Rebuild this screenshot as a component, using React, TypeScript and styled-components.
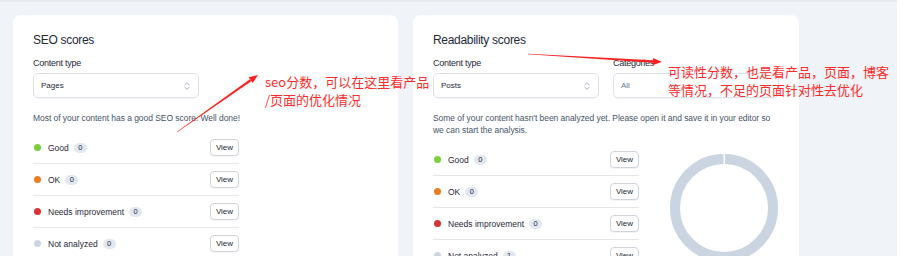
import React from "react";
import styled, { createGlobalStyle } from "styled-components";
import { ChevronsUpDown } from "lucide-react";

const GlobalStyle = createGlobalStyle`
  html, body {
    margin: 0;
    padding: 0;
    background: #ffffff;
  }
`;

type Status = "good" | "ok" | "bad" | "none";

const dotColors: Record<Status, string> = {
  good: "#7ad03a",
  ok: "#ee7c1b",
  bad: "#dc3232",
  none: "#cbd5e1",
};

const Screen = styled.div`
  position: relative;
  display: flex;
  width: 905px;
  height: 256px;
  overflow: hidden;
  font-family: "Liberation Sans", Arial, sans-serif;
  color: #1e293b;
`;

const Main = styled.div`
  flex: 0 0 897px;
  background: #f0f3f7;
  border-top: 2px solid #e6e9ee;
  box-sizing: border-box;
  padding: 13px 0 0 13px;
`;

const Scrollbar = styled.div`
  flex: 1;
  background: #ffffff;
`;

const Cards = styled.div`
  display: flex;
  gap: 15px;
  align-items: flex-start;
`;

const Card = styled.section<{ $width: number }>`
  width: ${({ $width }) => $width}px;
  box-sizing: border-box;
  background: #ffffff;
  border-radius: 8px;
  padding: 17px 20px 20px;
  height: 300px;
`;

const Heading = styled.h2`
  margin: 0;
  font-size: 12px;
  line-height: 16px;
  font-weight: 400;
  letter-spacing: -0.3px;
  color: #1e293b;
`;

const Filters = styled.div`
  display: grid;
  grid-template-columns: 1fr 1fr;
  gap: 14px;
  margin-top: 9px;
`;

const Field = styled.div`
  display: flex;
  flex-direction: column;
  gap: 4px;
`;

const Label = styled.label`
  font-size: 9px;
  line-height: 12px;
  letter-spacing: -0.25px;
  color: #1f2937;
`;

const Select = styled.div`
  display: flex;
  align-items: center;
  justify-content: space-between;
  height: 25px;
  box-sizing: border-box;
  padding: 0 6px 0 7px;
  border: 1px solid #dde2ea;
  border-radius: 5px;
  font-size: 8px;
  color: #1e293b;
  box-shadow: 0 1px 1px rgba(15, 23, 42, 0.03);
`;

const SelectValue = styled.span<{ $muted?: boolean }>`
  color: ${({ $muted }) => ($muted ? "#64748b" : "#1e293b")};
`;

const Description = styled.p`
  margin: 14px 0 0;
  font-size: 8.5px;
  line-height: 12px;
  letter-spacing: -0.05px;
  color: #475569;
  max-width: 346px;
`;

const Body = styled.div`
  display: flex;
  align-items: center;
  gap: 31px;
  margin-top: 8px;
`;

const List = styled.ul`
  list-style: none;
  margin: 0;
  padding: 0;
  width: 206px;
`;

const Row = styled.li`
  display: flex;
  align-items: center;
  height: 31px;
  border-bottom: 1px solid #e5e7eb;
  &:last-child {
    border-bottom: none;
  }
`;

const Dot = styled.span<{ $status: Status }>`
  width: 7px;
  height: 7px;
  margin-left: 1px;
  border-radius: 50%;
  flex-shrink: 0;
  background: ${({ $status }) => dotColors[$status]};
`;

const RowLabel = styled.span`
  margin-left: 7px;
  font-size: 8.5px;
  color: #1f2937;
`;

const Badge = styled.span`
  margin-left: 5px;
  height: 10px;
  min-width: 13px;
  padding: 0 4px;
  box-sizing: border-box;
  border-radius: 999px;
  background: #e2e8f0;
  font-size: 7.5px;
  line-height: 10px;
  text-align: center;
  color: #1e293b;
`;

const ViewButton = styled.button`
  margin-left: auto;
  width: 29px;
  height: 17px;
  padding: 0;
  border: 1px solid #d1d5db;
  border-radius: 4px;
  background: #ffffff;
  font-family: inherit;
  font-size: 8px;
  color: #1e293b;
  box-shadow: 0 1px 1px rgba(15, 23, 42, 0.05);
`;

const Overlay = styled.svg`
  position: absolute;
  inset: 0;
  pointer-events: none;
`;

const Note = styled.div<{ $x: number; $y: number }>`
  position: absolute;
  left: ${({ $x }) => $x}px;
  top: ${({ $y }) => $y}px;
  font-family: "Noto Sans CJK SC", "Liberation Sans", sans-serif;
  font-size: 13px;
  line-height: 18px;
  color: #ff2a2a;
  white-space: nowrap;
`;

type Item = { status: Status; label: string; count: number };

const seoItems: Item[] = [
  { status: "good", label: "Good", count: 0 },
  { status: "ok", label: "OK", count: 0 },
  { status: "bad", label: "Needs improvement", count: 0 },
  { status: "none", label: "Not analyzed", count: 0 },
];

const readabilityItems: Item[] = [
  { status: "good", label: "Good", count: 0 },
  { status: "ok", label: "OK", count: 0 },
  { status: "bad", label: "Needs improvement", count: 0 },
  { status: "none", label: "Not analyzed", count: 1 },
];

const ScoreList = ({ items }: { items: Item[] }) => (
  <List>
    {items.map((item) => (
      <Row key={item.label}>
        <Dot $status={item.status} />
        <RowLabel>{item.label}</RowLabel>
        <Badge>{item.count}</Badge>
        <ViewButton>View</ViewButton>
      </Row>
    ))}
  </List>
);

const Donut = () => {
  const r = 49;
  const c = 2 * Math.PI * r;
  return (
    <svg width="108" height="108" viewBox="0 0 108 108">
      <circle
        cx="54"
        cy="54"
        r={r}
        fill="none"
        stroke="#cbd5e1"
        strokeWidth="10"
        strokeDasharray={`${c - 2} 2`}
        strokeDashoffset={-1}
        transform="rotate(-90 54 54)"
      />
    </svg>
  );
};

// tapered red arrow, thin at the tail and heavier near the head
const arrowPoints = (x1: number, y1: number, x2: number, y2: number) => {
  const len = Math.hypot(x2 - x1, y2 - y1);
  const dx = (x2 - x1) / len;
  const dy = (y2 - y1) / len;
  const nx = -dy;
  const ny = dx;
  const head = 9;
  const bx = x2 - dx * head;
  const by = y2 - dy * head;
  const p = (x: number, y: number) => `${x.toFixed(1)},${y.toFixed(1)}`;
  const shaft = [
    p(x1 + nx * 0.2, y1 + ny * 0.2),
    p(bx + nx * 1.2, by + ny * 1.2),
    p(bx - nx * 1.2, by - ny * 1.2),
    p(x1 - nx * 0.2, y1 - ny * 0.2),
  ].join(" ");
  const tip = [p(x2, y2), p(bx + nx * 3.5, by + ny * 3.5), p(bx - nx * 3.5, by - ny * 3.5)].join(" ");
  return { shaft, tip };
};

const Arrow = ({ from, to }: { from: [number, number]; to: [number, number] }) => {
  const { shaft, tip } = arrowPoints(from[0], from[1], to[0], to[1]);
  return (
    <g fill="#ff2020">
      <polygon points={shaft} />
      <polygon points={tip} />
    </g>
  );
};

export default function App() {
  return (
    <>
      <GlobalStyle />
      <Screen>
        <Main>
          <Cards>
            <Card $width={385}>
              <Heading>SEO scores</Heading>
              <Filters>
                <Field>
                  <Label>Content type</Label>
                  <Select>
                    <SelectValue>Pages</SelectValue>
                    <ChevronsUpDown size={10} color="#94a3b8" strokeWidth={2} />
                  </Select>
                </Field>
              </Filters>
              <Description>Most of your content has a good SEO score. Well done!</Description>
              <Body>
                <ScoreList items={seoItems} />
              </Body>
            </Card>
            <Card $width={386}>
              <Heading>Readability scores</Heading>
              <Filters>
                <Field>
                  <Label>Content type</Label>
                  <Select>
                    <SelectValue>Posts</SelectValue>
                    <ChevronsUpDown size={10} color="#94a3b8" strokeWidth={2} />
                  </Select>
                </Field>
                <Field>
                  <Label>Categories</Label>
                  <Select>
                    <SelectValue $muted>All</SelectValue>
                  </Select>
                </Field>
              </Filters>
              <Description>
                Some of your content hasn't been analyzed yet. Please open it and save it in your editor so
                we can start the analysis.
              </Description>
              <Body>
                <ScoreList items={readabilityItems} />
                <Donut />
              </Body>
            </Card>
          </Cards>
        </Main>
        <Scrollbar />
        <Overlay width="905" height="256" viewBox="0 0 905 256">
          <Arrow from={[177, 132]} to={[258, 75]} />
          <Arrow from={[528, 54]} to={[662, 62]} />
        </Overlay>
        <Note $x={265} $y={73}>
          seo分数，可以在这里看产品
          <br />
          /页面的优化情况
        </Note>
        <Note $x={668} $y={63}>
          可读性分数，也是看产品，页面，博客
          <br />
          等情况，不足的页面针对性去优化
        </Note>
      </Screen>
    </>
  );
}
